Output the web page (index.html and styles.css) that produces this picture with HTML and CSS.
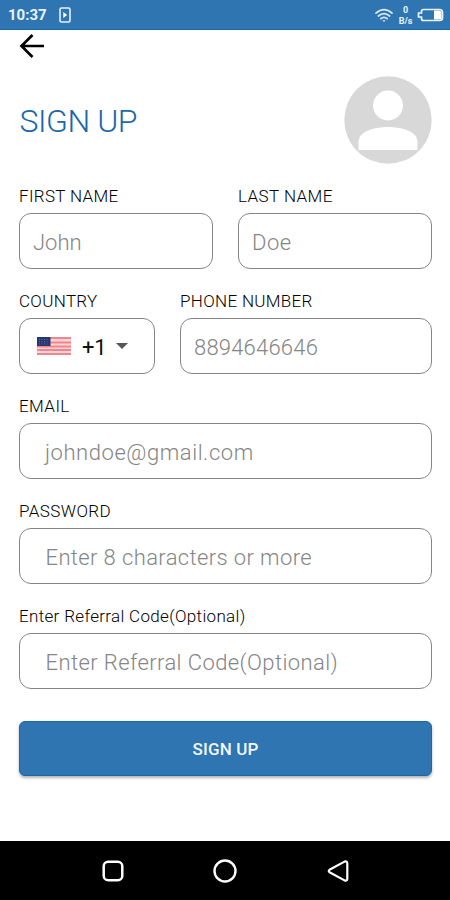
FILE: index.html
```html
<!DOCTYPE html>
<html lang="en">
<head>
<meta charset="utf-8">
<title>Sign up</title>
<link rel="stylesheet" href="styles.css">
</head>
<body>
<div class="screen">
  <header class="status">
    <span class="time">10:37</span>
    <svg class="cast" width="12" height="16" viewBox="0 0 12 16"><rect x="1" y="1" width="10" height="14" rx="1.5" fill="none" stroke="#e6f1fb" stroke-width="1.6"/><path d="M4.3 5v6L8.2 8z" fill="#fff"/></svg>
    <svg class="wifi" width="18" height="15" viewBox="0 0 18 15" fill="none" stroke="#d9eafa" stroke-width="1.7" stroke-linecap="round"><path d="M1 5.2Q9-1.8 17 5.2M3.4 8Q9 3.2 14.6 8M5.8 10.7Q9 8 12.2 10.7"/><path d="M7.4 12.3h3.2L9 14z" fill="#d9eafa" stroke="none"/></svg>
    <span class="rate"><span>0</span><span>B/s</span></span>
    <svg class="battery" width="27" height="14" viewBox="0 0 27 14"><path d="M6.5 1.5h16q3 0 3 3v5q0 3-3 3h-16q-2 0-2-2V9H1.5V5h3V3.500q0-2 2-2z" fill="none" stroke="#e9f4fd" stroke-width="1.7"/><path d="M17 2.500h5q2.500 0 2.500 2.500v4q0 2.500-2.500 2.500h-5z" fill="#fff"/></svg>
  </header>
  <main class="content">
    <svg class="back" width="26" height="24" viewBox="0 0 26 24" fill="none" stroke="#000" stroke-width="2.700"><path d="M25 12H2.500M13.500 1L2.500 12L13.500 23"/></svg>
    <div class="heading">
      <h1 class="title">SIGN UP</h1>
      <svg class="avatar" width="88" height="88" viewBox="0 0 88 88"><circle cx="44" cy="44" r="43.700" fill="#d8d8d8"/><circle cx="44" cy="29.500" r="15" fill="#fff"/><path d="M14.500 74V66C14.500 55 31 51 44 51S73.500 55 73.500 66V74z" fill="#fff"/></svg>
    </div>
    <form class="form">
      <div class="row names">
        <div class="field"><span class="label">FIRST NAME</span><div class="box"><span class="hint">John</span></div></div>
        <div class="field"><span class="label l-last">LAST NAME</span><div class="box"><span class="hint h-last">Doe</span></div></div>
      </div>
      <div class="row phone">
        <div class="field"><span class="label">COUNTRY</span>
          <div class="box country">
            <svg class="flag" width="34" height="18" viewBox="0 0 34 18"><rect width="34" height="18" fill="#fbd5d7"/><path d="M0 1h34M0 5.500h34M0 9.500h34M0 13h34M0 17h34" stroke="#f0868c" stroke-width="1.800"/><rect width="13.500" height="9" fill="#26366f"/><path d="M2 2.500h10M2 4.800h10M2 7h10" stroke="#7180a8" stroke-width=".8" stroke-dasharray="1 1.500"/></svg>
            <span class="code">+1</span>
            <svg class="caret" width="12" height="6" viewBox="0 0 12 6"><path d="M0 0h12L6 6z" fill="#555"/></svg>
          </div>
        </div>
        <div class="field"><span class="label">PHONE NUMBER</span><div class="box"><span class="hint h-phone">8894646646</span></div></div>
      </div>
      <div class="field"><span class="label l-email">EMAIL</span><div class="box wide"><span class="hint h-email">johndoe@gmail.com</span></div></div>
      <div class="field"><span class="label l-pass">PASSWORD</span><div class="box wide"><span class="hint h-pass">Enter 8 characters or more</span></div></div>
      <div class="field"><span class="label">Enter Referral Code(Optional)</span><div class="box wide"><span class="hint h-ref">Enter Referral Code(Optional)</span></div></div>
      <button class="submit" type="button">SIGN UP</button>
    </form>
  </main>
  <nav class="nav">
    <svg width="24" height="24" viewBox="0 0 24 24" fill="none" stroke="#fff" stroke-width="2.500"><rect x="2.700" y="2.700" width="18.600" height="18.600" rx="4.500"/></svg>
    <svg width="24" height="24" viewBox="0 0 24 24" fill="none" stroke="#fff" stroke-width="2.400"><circle cx="12" cy="12" r="10.500"/></svg>
    <svg width="24" height="24" viewBox="0 0 24 24" fill="none" stroke="#fff" stroke-width="2.200" stroke-linejoin="round"><path d="M18.500 2.600L3.500 10.800Q2 12 3.500 13.200L18.500 21.400Q21.300 22.300 21.300 19.500V4.500Q21.300 1.700 18.500 2.600z"/></svg>
  </nav>
</div>
</body>
</html>
```
FILE: styles.css
```css
* { box-sizing: border-box; }
body { margin: 0; background: #fff; font-family: Roboto, sans-serif; }
.screen { width: 450px; height: 900px; display: flex; flex-direction: column; overflow: hidden; }
.status { height: 30px; flex: none; display: flex; align-items: center; padding: 1px 6px 0 8px; background: #2e75b1; border-bottom: 1px solid #1766a8; color: #e9f4fd; }
.time { width: 39px; font-size: 15px; line-height: 18px; font-weight: 700; }
.cast { margin-left: 12px; }
.wifi { margin-left: auto; }
.rate { width: 17px; margin: 0 3px 0 4px; display: flex; flex-direction: column; gap: 1px; text-align: center; font-size: 9px; line-height: 10px; font-weight: 700; }
.content { flex: 1; padding: 4px 18px 0 19px; }
.back { display: block; }
.heading { height: 88px; margin-top: 18px; display: flex; align-items: center; justify-content: space-between; }
.title { margin: 2px 0 0 .5px; color: #1968aa; font-size: 32px; line-height: 40px; font-weight: 350; letter-spacing: -.45px; white-space: nowrap; }
.form { margin-top: 21.500px; display: flex; flex-direction: column; gap: 21.500px; }
.row { display: grid; column-gap: 25px; }
.names { grid-template-columns: 1fr 1fr; }
.phone { grid-template-columns: 136px 1fr; }
.label { display: block; width: max-content; height: 20px; margin-bottom: 7.500px; font-size: 17px; line-height: 20px; font-weight: 300; letter-spacing: .33px; color: #000; white-space: nowrap; }
.l-last, .l-email, .l-pass { letter-spacing: .42px; }
.box { height: 56px; display: flex; align-items: center; padding: 4px 13px 0; border: 1px solid #858585; border-radius: 12px; }
.wide { padding-left: 25px; }
.hint { color: #858585; font-size: 22px; line-height: 28px; font-weight: 300; white-space: nowrap; }
.h-last { letter-spacing: .5px; }
.h-phone { letter-spacing: .2px; }
.h-email { letter-spacing: .55px; }
.h-pass { margin-left: .5px; letter-spacing: .38px; }
.h-ref { margin-left: .5px; letter-spacing: .41px; }
.country { padding: 0 17px; }
.code { margin-left: 11px; padding-top: 2px; font-size: 22px; color: #111; letter-spacing: -.3px; }
.caret { margin-left: 10px; }
.submit { height: 55px; margin: 10.500px 0 0; padding: 1px 0 0; border: 1px solid #1869aa; border-radius: 6px; background: #2e75b1; color: #f2f8fd; font: 500 17px Roboto, sans-serif; letter-spacing: .15px; box-shadow: 0 2px 3px rgba(0, 0, 0, .3); }
.nav { height: 59px; flex: none; background: #000; display: flex; justify-content: center; align-items: center; gap: 88.500px; }
```
